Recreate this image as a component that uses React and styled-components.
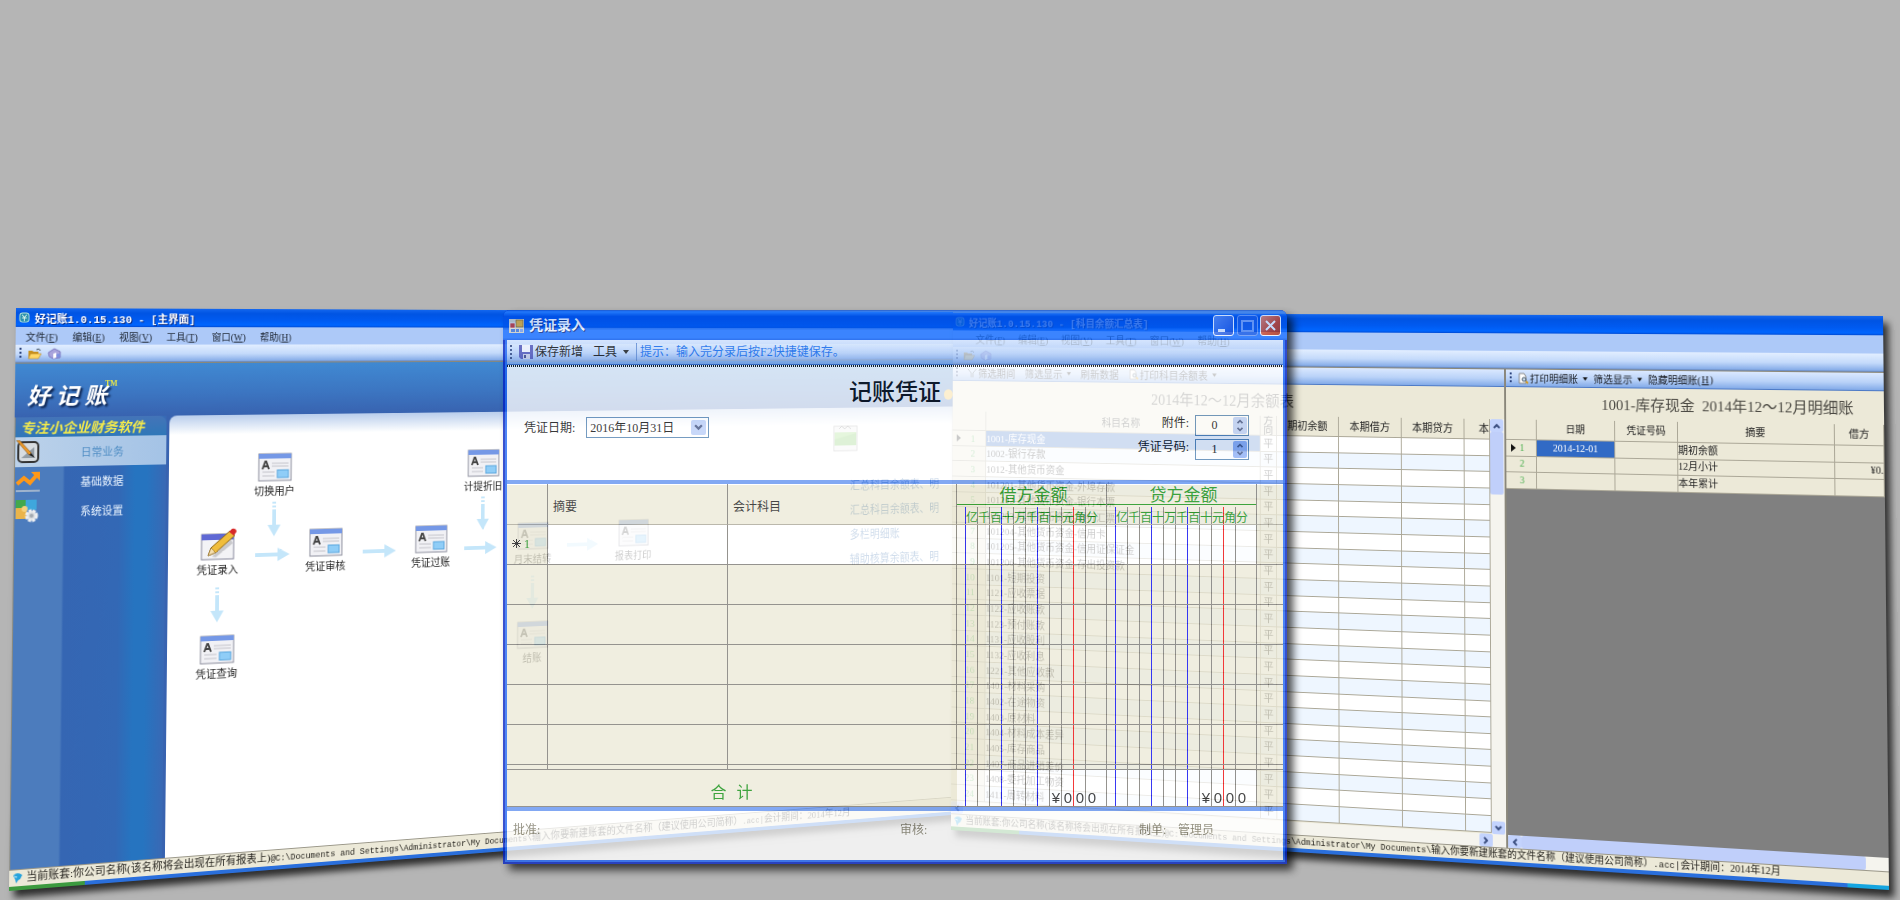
import React from 'react';
import styled, { createGlobalStyle, css } from 'styled-components';

const GlobalStyle = createGlobalStyle`
  * { box-sizing: border-box; }
  body { margin: 0; background: #b5b5b5; }
  button, input, select { font: inherit; color: inherit; margin: 0; }
  button { background: none; border: 0; padding: 0; cursor: pointer; white-space: nowrap; }
  table { border-collapse: separate; border-spacing: 0; table-layout: fixed; }
  td, th { padding: 0; font-weight: normal; }
`;

const cjk = '"Liberation Serif", "Noto Sans CJK SC", sans-serif';

/* Projects a flat width x height panel onto four desktop corners (TL, TR, BR, BL). */
function project(width, height, [[x0, y0], [x1, y1], [x2, y2], [x3, y3]]) {
  const dx1 = x1 - x2, dx2 = x3 - x2, sx = x0 - x1 + x2 - x3;
  const dy1 = y1 - y2, dy2 = y3 - y2, sy = y0 - y1 + y2 - y3;
  const den = dx1 * dy2 - dx2 * dy1;
  const g = (sx * dy2 - dx2 * sy) / den;
  const h = (dx1 * sy - sx * dy1) / den;
  const m = [
    (x1 - x0 + g * x1) / width, (y1 - y0 + g * y1) / width, 0, g / width,
    (x3 - x0 + h * x3) / height, (y3 - y0 + h * y3) / height, 0, h / height,
    0, 0, 1, 0,
    x0, y0, 0, 1,
  ];
  return `matrix3d(${m.join(',')})`;
}

const leftView = project(1084, 583, [[16, 308], [953, 312], [952, 815], [9, 891]]);
const rightView = project(1000, 560, [[953, 313], [1883, 316], [1889, 890], [951, 830]]);

const Desktop = styled.main`
  position: relative;
  width: 100%;
  min-height: 100vh;
  overflow: hidden;
  background: #b5b5b5;
  font-family: ${cjk};
  font-size: 12px;
`;

const TiltedWindow = styled.section`
  position: absolute;
  top: 0;
  left: calc(50% - 950px);
  width: ${p => p.$w}px;
  height: ${p => p.$h}px;
  display: flex;
  flex-direction: column;
  transform-origin: 0 0;
  transform: ${p => p.$view};
  box-shadow: 5px 7px 7px rgba(0, 0, 0, .75);
  background: #ece9d8;
  font-size: 11px;
`;

const AppTitle = styled.header`
  display: flex;
  align-items: center;
  gap: 5px;
  flex: none;
  height: 19px;
  padding: 0 3px;
  background: linear-gradient(#1467ee, #0054e3 25%, #005af0 60%, #0066ff 90%, #0048d0);
  color: #fff;
  font-weight: bold;
  text-shadow: 1px 1px #0a2a80;
  white-space: nowrap;
  svg { width: 11px; height: 11px; }
  small { font: bold 11px "Liberation Mono", monospace; }
`;

const MenuBar = styled.nav`
  display: flex;
  align-items: center;
  gap: 15px;
  flex: none;
  height: 18px;
  padding-left: ${p => p.$inset}px;
  background: #adc9f8;
  color: #1c2430;
  font-size: ${p => p.$size}px;
  u { font-size: 10px; }
`;

const IconBar = styled.div`
  display: flex;
  align-items: center;
  gap: 6px;
  flex: none;
  height: 18px;
  padding: 0 4px;
  background: linear-gradient(#e2eeff, #c4dafb 55%, #84abe8);
  border-bottom: 1px solid #6f8fc4;
  button { display: flex; }
  svg { width: 14px; height: 12px; }
`;

const Grip = styled.i`
  flex: none;
  width: 2px;
  height: ${p => p.$h || 11}px;
  background: repeating-linear-gradient(#29417c 0 2px, transparent 2px 4px);
`;

const StatusBar = styled.footer`
  display: flex;
  align-items: center;
  gap: 3px;
  flex: none;
  height: ${p => p.$h}px;
  padding: 0 3px;
  background: #ece9d8;
  border-top: 1px solid #9b988a;
  color: #26241f;
  font-size: ${p => p.$size}px;
  line-height: 1;
  white-space: nowrap;
  svg { width: 11px; height: 12px; flex: none; }
  code { font: 9px "Liberation Mono", monospace; }
`;

const TaskEdge = styled.div`
  flex: none;
  height: 4px;
  background: ${p => p.$end
    ? 'linear-gradient(90deg, #3c9a3f 0 8%, #2a6fdc 8% 96%, #14a5e0 96%)'
    : 'linear-gradient(90deg, #3c9a3f 0 7%, #2a6fdc 7%)'};
`;

/* ---- main screen ---- */
const Banner = styled.div`
  display: flex;
  justify-content: space-between;
  align-items: center;
  flex: none;
  height: 55px;
  padding: 0 0 0 12px;
  background: linear-gradient(#4089d2, #3c76c2 55%, #3863b0);
  border-top: 1px solid #8c8878;
`;

const Logo = styled.h1`
  display: flex;
  align-items: flex-start;
  gap: 6px;
  margin: 7px 0 0;
  color: #fff;
  font: italic bold 23px/28px "Noto Sans CJK SC", sans-serif;
  text-shadow: 2px 2px 2px #0d2450;
  sup { font: bold 8px/8px "Liberation Serif", serif; color: #e6e64a; margin-left: -8px; text-shadow: none; }
`;

const BannerDot = styled.i`
  width: 12px;
  height: 12px;
  margin-top: 26px;
  border-radius: 50%;
  background: #f5b82e;
`;

const MainBody = styled.div`
  display: flex;
  flex: 1;
  min-height: 0;
  background: #3863b0;
`;

const SideNav = styled.nav`
  flex: none;
  width: 155px;
  background: linear-gradient(90deg, #4c7cbd 0 48px, #3566b3 50px, #3368b5 105px, #2674c0 122px, #2674c0 134px, #3a68b4 155px);
  border-left: 1px solid #8a8a80;
`;

const Slogan = styled.p`
  margin: 0;
  height: 20px;
  padding-left: 5px;
  border-radius: 0 8px 0 0;
  background: linear-gradient(#4474b8, #2f77b8);
  color: #f3ea4c;
  font: italic bold 14px/20px "Noto Sans CJK SC", sans-serif;
  white-space: nowrap;
`;

const NavButton = styled.button`
  display: grid;
  grid-template-columns: 48px 1fr;
  align-items: center;
  width: 100%;
  height: 30px;
  padding-left: 1px;
  text-align: left;
  font-size: 11px;
  color: ${p => p.$active ? '#4f8dc4' : '#eaf4ff'};
  background: ${p => p.$active ? 'linear-gradient(90deg, #bcd2ea, #a4c3e6)' : 'none'};
  span { padding-left: 17px; }
  svg { width: 24px; height: 24px; }
`;

const Flow = styled.div`
  position: relative;
  flex: 1;
  margin-left: 3px;
  border-radius: 8px 0 0 0;
  background: linear-gradient(#b9cdec, #fff 20px);
`;

const at = css`
  position: absolute;
  left: ${p => p.$x}px;
  top: ${p => p.$y}px;
`;

const FlowNode = styled.button`
  ${at}
  display: flex;
  flex-direction: column;
  align-items: center;
  gap: 3px;
  width: 60px;
  margin-left: -30px;
  font-size: 11px;
  line-height: 14px;
  color: #222;
  svg { width: 37px; height: 30px; }
`;

const FlowArrow = styled.svg`
  ${at}
  width: 38px;
  height: 16px;
  margin: -8px 0 0 -19px;
  transform: rotate(${p => p.$down ? 90 : 0}deg);
`;

const ReportLinks = styled.ul`
  ${at}
  margin: 0;
  padding: 0;
  list-style: none;
  white-space: nowrap;
  line-height: 28px;
  font-size: 13px;
  a { color: #2d66a8; text-decoration: none; }
`;

const ChartTile = styled.svg`
  ${at}
  width: 32px;
  height: 30px;
`;

/* ---- balance report ---- */
const Split = styled.div`
  display: grid;
  grid-template-columns: 617px 1fr;
  flex: 1;
  min-height: 0;
  border-top: 1px solid #8c8878;
`;

const Pane = styled.section`
  display: flex;
  flex-direction: column;
  min-width: 0;
  min-height: 0;
  overflow: hidden;
  background: ${p => p.$dark ? '#808080' : '#ece9d8'};
  border-left: ${p => p.$dark ? '2px solid #8a877b' : '0'};
`;

const PaneBar = styled.div`
  display: flex;
  align-items: center;
  gap: ${p => p.$gap}px;
  flex: none;
  height: 18px;
  padding: 0 4px;
  background: linear-gradient(#dbe9ff, #b9d2f8 55%, #82aae8);
  border-bottom: 1px solid #4d7ac6;
  font-size: ${p => p.$size}px;
  color: #16191f;
  button { display: flex; align-items: center; gap: 1px; }
  svg { width: 12px; height: 12px; }
  svg.caret { width: 5px; height: 4px; margin-left: 4px; }
`;

const PaneTitle = styled.h2`
  flex: none;
  margin: 0;
  height: 33px;
  padding-left: ${p => p.$inset}px;
  background: #ece9d8;
  color: #4a4842;
  font: normal ${p => p.$size}px/35px ${cjk};
  white-space: nowrap;
`;

const PaneGrid = styled.div`
  display: flex;
  flex: 1;
  min-height: 0;
  overflow: hidden;
`;

const Ledger = styled.table`
  flex: none;
  width: ${p => p.$w}px;
  height: ${p => p.$h}px;
  font-size: ${p => p.$size}px;
  line-height: 14px;
  background: #fff;
  white-space: nowrap;
  color: #222;
  td, th { border-right: 1px solid #aba797; border-bottom: 1px solid #aba797; overflow: hidden; }
  thead th { background: #ece9d8; height: 21px; line-height: 10px; }
  tbody th { background: #ece9d8; color: #4bb04f; padding-right: 12px; text-align: right; }
`;

const LedgerRow = styled.tr`
  td { background: ${p => p.$plain ? '#ece9d8' : p.$alt ? '#eef6ff' : '#fff'}; }
  td:nth-child(2) { ${p => p.$picked && 'background: #316ac5; color: #fff;'} }
`;

const ClippedHead = styled.th`
  text-align: right;
`;

const Center = styled.td`
  text-align: center;
`;

const Right = styled.td`
  text-align: right;
`;

const Marker = styled.svg`
  float: left;
  width: 5px;
  height: 8px;
  margin: 3px 0 0 5px;
`;

const ScrollTrack = styled.div`
  display: flex;
  flex-direction: ${p => p.$vertical ? 'column' : 'row'};
  justify-content: space-between;
  flex: ${p => p.$vertical ? '1' : 'none'};
  height: ${p => p.$vertical ? 'auto' : '13px'};
  padding-right: ${p => p.$corner ? 14 : 0}px;
  background: #f5f4ee;
`;

const ScrollArrow = styled.button`
  display: grid;
  place-items: center;
  flex: none;
  width: 14px;
  height: 13px;
  border-radius: 2px;
  background: #c3d3fd;
  svg { width: 8px; height: 8px; transform: rotate(${p => p.$turn}deg); }
`;

const Thumb = styled.i`
  flex: ${p => p.$vertical ? '0 0 64px' : '0 1 345px'};
  margin-right: auto;
  width: ${p => p.$vertical ? '14px' : 'auto'};
  margin-bottom: ${p => p.$vertical ? 'auto' : '0'};
  border-radius: 2px;
  background: #c0cffa;
`;

/* ---- voucher window ---- */
const Voucher = styled.section`
  position: absolute;
  top: 310px;
  left: calc(50% - 447px);
  width: 784px;
  display: flex;
  flex-direction: column;
  padding: 0 2px 2px;
  border: 2px solid #0020c0;
  border-top: 0;
  border-radius: 7px 7px 0 0;
  box-shadow: 6px 6px 8px rgba(0, 0, 0, .9);
  background: #1c62f2;
  opacity: .78;
`;

const VoucherTitle = styled.header`
  display: flex;
  align-items: center;
  gap: 5px;
  height: 30px;
  margin: 0 -4px;
  padding: 1px 6px 0;
  border-radius: 7px 7px 0 0;
  background: linear-gradient(#0045d0, #2a80ff 6%, #0050e6 22%, #0054e8 58%, #1a70ff 68%, #1a70ff 92%, #0a58e8);
  color: #fff;
  h2 { flex: 1; margin: 0; font: bold 14px/20px ${cjk}; text-shadow: 1px 1px #0a2a80; }
  > svg { width: 15px; height: 14px; }
`;

const CaptionButton = styled.button`
  display: grid;
  place-items: center;
  width: 21px;
  height: 21px;
  margin-left: ${p => p.$close ? '-3px' : '-2px'};
  border: 1px solid ${p => p.$dim ? '#6f9cf5' : '#fff'};
  border-radius: 3px;
  background: ${p => p.$close
    ? 'linear-gradient(135deg, #e8866a, #d0401c 60%, #b53010)'
    : p.$dim ? '#1659e4' : 'linear-gradient(135deg, #5a8df5, #1c50d8)'};
  svg { width: 15px; height: 15px; }
`;

const VoucherBar = styled.div`
  display: flex;
  align-items: center;
  height: 25px;
  padding-left: 3px;
  background: linear-gradient(#e0edff, #b8d1f8 55%, #7fa6e6);
  border-bottom: 1px solid #2f5fb8;
  line-height: 18px;
  color: #000;
  button { display: flex; align-items: center; }
`;

const SaveButton = styled.button`
  gap: 2px;
  margin: 0 10px 0 7px;
  svg { width: 14px; height: 14px; }
`;

const ToolsButton = styled.button`
  gap: 6px;
  svg { width: 6px; height: 4px; }
`;

const Hint = styled.span`
  margin-left: 7px;
  padding-left: 3px;
  border-left: 1px solid #5b86cf;
  color: #005fe8;
`;

const Dots = styled.i`
  height: 2px;
  background: repeating-linear-gradient(90deg, #000 0 1px, #fff 1px 2px);
`;

const VoucherForm = styled.form`
  display: grid;
  grid-template-columns: 1fr auto 1fr;
  height: 113px;
  background: #fff;
  h3 { margin: 0; padding-top: 11px; font: 500 23px/30px ${cjk}; color: #000; }
`;

const DateField = styled.div`
  display: flex;
  align-items: center;
  align-self: start;
  gap: 11px;
  padding: 50px 0 0 17px;
  line-height: 20px;
`;

const DateBox = styled.span`
  display: flex;
  align-items: center;
  width: 123px;
  height: 21px;
  padding: 0 2px;
  border: 1px solid #4f80b0;
  background: #fff;
  input { width: 100%; min-width: 0; border: 0; padding: 0 1px; outline: 0; background: none; }
`;

const DropButton = styled.button`
  display: grid;
  place-items: center;
  flex: none;
  width: 15px;
  height: 15px;
  border-radius: 2px;
  background: #b9cdf8;
  svg { width: 9px; height: 9px; }
`;

const NumberFields = styled.div`
  display: flex;
  flex-direction: column;
  align-items: flex-end;
  gap: 3px;
  padding: 48px 34px 0 0;
`;

const NumberField = styled.label`
  display: flex;
  gap: 6px;
  height: 21px;
  line-height: 16px;
`;

const SpinBox = styled.span`
  display: flex;
  align-items: center;
  width: 54px;
  height: 21px;
  padding-right: 1px;
  border: 1px solid #4f80b0;
  input { width: 100%; min-width: 0; padding: 0 0 2px; border: 0; outline: 0; background: none; text-align: center; }
`;

const Spinner = styled.span`
  display: grid;
  flex: none;
  width: 14px;
  height: 17px;
  border-radius: 2px;
  background: ${p => p.$strong ? '#8fb0f5' : '#b9cdf8'};
  button { display: grid; place-items: center; }
  svg { width: 8px; height: 5px; }
`;

const Rule = styled.i`
  flex: none;
  height: 4px;
  background: #5f90f0;
`;

const EntryTable = styled.table`
  width: 100%;
  color: #111;
  td, th { border-right: 1px solid #77756f; border-bottom: 1px solid #77756f; background-color: #ece9d8; text-align: left; }
  thead th { border-bottom-color: #a8a495; box-shadow: inset 0 1px #fff; }
  tr > :last-child { border-right: 0; }
`;

const EntryRow = styled.tr`
  height: ${p => p.$h}px;
  td:not(:last-child) { background-color: ${p => p.$active ? '#fff' : '#ece9d8'}; }
`;

const HeadCell = styled.th`
  padding: 3px 0 0 5px !important;
`;

const rulings = css`
  background-image:
    linear-gradient(#0000f0, #0000f0), linear-gradient(#0000f0, #0000f0), linear-gradient(#0000f0, #0000f0),
    linear-gradient(#f00000, #f00000),
    repeating-linear-gradient(90deg, #77756f 0 1px, transparent 1px 12px);
  background-repeat: no-repeat;
  background-size: 1px 100%, 1px 100%, 1px 100%, 1px 100%, 121px 100%;
  background-position: 8px 0, 44px 0, 80px 0, 116px 0, 8px 0;
`;

const Ruled = styled.td`
  ${rulings}
`;

const AmountHead = styled.th`
  color: #078a07;
  vertical-align: top;
  strong { display: block; height: 21px; padding-left: 4px; border-bottom: 1px solid #078a07; text-align: center; font: normal 17px/23px ${cjk}; }
`;

const Digits = styled.span`
  display: grid;
  grid-template-columns: repeat(11, 12px);
  height: 17px;
  margin-top: 2px;
  padding-left: 9px;
  line-height: 23px;
  ${rulings}
`;

const TotalLabel = styled.td`
  border-right-color: #ece9d8 !important;
`;

const TotalText = styled.span`
  display: flex;
  justify-content: center;
  gap: 10px;
  padding-top: 10px;
  color: #078a07;
  font-size: 16px;
  line-height: 20px;
`;

const TotalAmount = styled.td`
  ${rulings}
  background-color: #fff !important;
  vertical-align: bottom;
`;

const TotalDigits = styled.span`
  display: grid;
  grid-template-columns: repeat(4, 12px);
  padding-left: 93px;
  font: 15px/16px "Liberation Sans", sans-serif;
  text-align: center;
`;

const NewMark = styled.svg`
  width: 9px;
  height: 9px;
  margin: 0 3px 0 5px;
`;

const RowNo = styled.span`
  color: #078a07;
`;

const Signatures = styled.footer`
  display: grid;
  grid-template-columns: 387px 239px 39px 1fr;
  height: 49px;
  padding: 9px 0 0 6px;
  background: #fff;
  color: #7d7a68;
  line-height: 20px;
`;

/* ---- drawings ---- */
const Seal = () => (
  <svg viewBox="0 0 12 12" aria-hidden="true">
    <rect x="1" y="1" width="10" height="10" rx="3" fill="#2a8fae" stroke="#b7e6d8" />
    <path d="M3.5 3l2.5 3 2.500-3M3.500 6.500h5M6 6v4" stroke="#dff7ea" fill="none" />
  </svg>
);
const Folder = () => (
  <svg viewBox="0 0 14 12" aria-hidden="true">
    <path d="M1 3h4l1 1h5v7H1z" fill="#c8901c" />
    <path d="M3 6h11l-3 5H1z" fill="#ffd766" stroke="#a8761a" strokeWidth=".5" />
    <path d="M9 2q3-2 4 1" stroke="#345" fill="none" />
  </svg>
);
const Home = () => (
  <svg viewBox="0 0 14 12" aria-hidden="true">
    <path d="M1 5l6-4 6 3v6l-7 1-4-2z" fill="#a9a4dc" stroke="#7c78c0" />
    <path d="M6 6l3-1v5l-3 1z" fill="#fff" /><circle cx="11" cy="8" r="2" fill="#7b8fe0" />
  </svg>
);
const Bird = () => (
  <svg viewBox="0 0 11 12" aria-hidden="true">
    <path d="M1 3q4-4 9 0l-2 4-2 1-2 3-1-4z" fill="#27a3dc" /><path d="M2 4l3 1" stroke="#c7efff" />
  </svg>
);
const FormCard = () => (
  <svg viewBox="0 0 37 30" aria-hidden="true">
    <rect x="1" y="1" width="35" height="28" fill="#f1f1f5" stroke="#8b8d9c" />
    <rect x="1" y="1" width="35" height="5" fill="#7598e6" />
    <path d="M5 17l3-8h1l3 8M6 14h5" stroke="#444" strokeWidth="2" fill="none" />
    <path d="M15 11h18M15 14h18M5 20h13M5 24h13" stroke="#c3c3ca" />
    <rect x="21" y="18" width="12" height="8" fill="#8fcdf7" stroke="#58a5dd" />
  </svg>
);
const EditCard = () => (
  <svg viewBox="0 0 37 30" aria-hidden="true" overflow="visible">
    <rect x="1" y="3" width="34" height="26" fill="#f3f3f6" stroke="#85869a" />
    <rect x="1" y="3" width="34" height="6" fill="#5f68d4" />
    <path d="M12 26l20-17 2 4-18 14z" fill="#c9c9cc" />
    <path d="M8 25l3-8L31 0l5 5-20 17z" fill="#f0bd3b" stroke="#8b6416" />
    <path d="M8 25l3-8 5 5z" fill="#f5dfb0" stroke="#8b6416" strokeWidth=".6" />
    <path d="M30 1l3-3q4-1 5 3l-3 4z" fill="#d72929" />
  </svg>
);
const Pencil = () => (
  <svg viewBox="0 0 24 24" aria-hidden="true">
    <rect x="2" y="2" width="20" height="20" rx="4" fill="#d7dce0" stroke="#333" strokeWidth="2" />
    <path d="M5 18h13V7z" fill="#939da5" />
    <path d="M0 0l3 0 12 13-2 2z" fill="#f09a25" stroke="#7b4b16" strokeWidth=".6" /><path d="M13 15l2-2 4 5z" fill="#222" />
  </svg>
);
const Trend = () => (
  <svg viewBox="0 0 24 24" aria-hidden="true">
    <path d="M1 14l7-6 6 5 7-8" stroke="#ff9818" strokeWidth="4" fill="none" />
    <path d="M15 2h9v9z" fill="#ff9818" /><path d="M0 21h24" stroke="#9fb3cd" strokeWidth="2" />
  </svg>
);
const Puzzle = () => (
  <svg viewBox="0 0 24 24" aria-hidden="true">
    <rect width="10" height="9" fill="#42a84c" /><rect x="10" width="11" height="10" fill="#3fa7dc" />
    <rect y="8" width="11" height="11" fill="#eab44a" /><circle cx="9" cy="9" r="3" fill="#f6d27c" />
    <circle cx="16" cy="16" r="5" fill="#d9dde0" stroke="#eef0f2" strokeWidth="3" strokeDasharray="3 1" />
    <circle cx="16" cy="16" r="2" fill="#a2a9b0" />
  </svg>
);
const Preview = () => (
  <svg viewBox="0 0 12 12" aria-hidden="true">
    <path d="M2 1h5l2 3v7H2z" fill="#fff" stroke="#888" /><circle cx="7" cy="7" r="2" fill="#cde" stroke="#456" />
    <path d="M9 9l2 2" stroke="#d49a20" strokeWidth="2" />
  </svg>
);
const Funnel = () => (
  <svg viewBox="0 0 12 12" aria-hidden="true"><path d="M1 2l4 4v5M11 2L7 6v5" stroke="#456" fill="none" /></svg>
);
const Chevron = ({ up }) => (
  <svg viewBox="0 0 8 6" aria-hidden="true">
    <path d={up ? 'M1 5l3-3 3 3' : 'M1 1l3 3 3-3'} stroke="#3c4f80" strokeWidth="2" fill="none" />
  </svg>
);
const Caret = () => <svg className="caret" viewBox="0 0 6 4" aria-hidden="true"><path d="M0 0h6L3 4z" fill="#111" /></svg>;
const Pointer = () => <Marker viewBox="0 0 5 8" aria-hidden="true"><path d="M0 0l5 4-5 4z" fill="#111" /></Marker>;
const Disk = () => (
  <svg viewBox="0 0 14 14" aria-hidden="true">
    <path d="M0 0h14v14H2L0 12z" fill="#4a4fb4" /><rect x="3" y="0" width="8" height="7" fill="#f0f3fb" />
    <rect x="4" y="9" width="7" height="5" fill="#c7cbe2" /><rect x="5" y="10" width="2" height="3" fill="#333a80" />
  </svg>
);
const FormIcon = () => (
  <svg viewBox="0 0 15 14" aria-hidden="true">
    <rect width="15" height="14" fill="#d9d5c0" /><rect x="7" y="1" width="7" height="7" fill="#f0b429" stroke="#7d5c10" strokeWidth=".6" />
    <rect x="1" y="4" width="5" height="5" fill="#d33a28" stroke="#fff" strokeWidth=".6" />
    <rect x="2" y="10" width="4" height="3" fill="#3f74d8" /><rect x="7" y="10" width="3" height="3" fill="#3f74d8" /><rect x="11" y="10" width="3" height="3" fill="#78a0ea" />
  </svg>
);

const menuItems = [['文件', 'F'], ['编辑', 'E'], ['视图', 'V'], ['工具', 'T'], ['窗口', 'W'], ['帮助', 'H']];
const Menus = ({ inset, size }) => (
  <MenuBar $inset={inset} $size={size}>
    {menuItems.map(([name, key]) => <button key={key}>{name}(<u>{key}</u>)</button>)}
  </MenuBar>
);

const Status = ({ h, size }) => (
  <StatusBar $h={h} $size={size}>
    <Bird />
    <span>
      当前账套:你公司名称(该名称将会出现在所有报表上)<code>@C:\Documents and Settings\Administrator\My Documents\</code>输入你要新建账套的文件名称（建议使用公司简称）<code>.acc|</code>会计期间：2014年12月
    </span>
  </StatusBar>
);

const nodes = [
  [112, 40, '切换用户'], [344, 40, '计提折旧'],
  [52, 120, '凭证录入', true], [168, 120, '凭证审核'], [285, 120, '凭证过账'], [402, 120, '月末结转'], [521, 120, '报表打印'],
  [52, 227, '凭证查询'], [402, 227, '结账'],
];
const arrows = [
  [112, 110, true], [344, 110, true], [52, 197, true], [402, 197, true],
  [111, 146], [228, 146], [342, 146], [461, 146],
];

const MainScreen = () => (
  <TiltedWindow $w={1084} $h={583} $view={leftView}>
    <AppTitle><Seal /><span>好记账<small>1.0.15.130 - [</small>主界面<small>]</small></span></AppTitle>
    <Menus inset={10} size={10} />
    <IconBar><Grip /><button aria-label="打开"><Folder /></button><button aria-label="主页"><Home /></button></IconBar>
    <Banner>
      <Logo><span>好</span><span>记</span><span>账</span><sup>TM</sup></Logo>
      <BannerDot />
    </Banner>
    <MainBody>
      <SideNav>
        <Slogan>专注小企业财务软件</Slogan>
        <NavButton $active><Pencil /><span>日常业务</span></NavButton>
        <NavButton><Trend /><span>基础数据</span></NavButton>
        <NavButton><Puzzle /><span>系统设置</span></NavButton>
      </SideNav>
      <Flow>
        {nodes.map(([x, y, label, edit]) => (
          <FlowNode key={label} $x={x} $y={y}>{edit ? <EditCard /> : <FormCard />}{label}</FlowNode>
        ))}
        {arrows.map(([x, y, down]) => (
          <FlowArrow key={`${x}-${y}`} $x={x} $y={y} $down={down} viewBox="0 0 38 16" aria-hidden="true">
            <path d={down ? 'M0 6h2v4H0zM4 6h2v4H4zM8 6h16V1l12 7-12 7v-5H8z' : 'M0 6h24V1l13 7-13 7v-5H0z'} fill="#c4e6fa" />
          </FlowArrow>
        ))}
        <ChartTile $x={769} $y={20} viewBox="0 0 32 30" aria-hidden="true">
          <rect x="1" y="1" width="30" height="28" fill="#eee" stroke="#999" />
          <path d="M2 8h28v15H2z" fill="#8bd468" /><path d="M2 16L30 9v14H2z" fill="#6cc24c" /><path d="M8 4l3-3 4 3 4-3 4 3" stroke="#666" fill="none" />
        </ChartTile>
        <ReportLinks $x={791} $y={75}>
          {['汇总科目余额表、明', '汇总科目余额表、明', '多栏明细账', '辅助核算余额表、明'].map((t, i) => (
            <li key={i}><a href="#report">{t}</a></li>
          ))}
        </ReportLinks>
      </Flow>
    </MainBody>
    <Status h={17} size={11} />
    <TaskEdge />
  </TiltedWindow>
);

const accounts = [
  '1001-库存现金', '1002-银行存款', '1012-其他货币资金', '101201-其他货币资金-外埠存款', '101202-其他货币资金-银行本票',
  '101203-其他货币资金-银行汇票', '101204-其他货币资金-信用卡', '101205-其他货币资金-信用证保证金', '101206-其他货币资金-存出投资款',
  '1101-短期投资', '1121-应收票据', '1122-应收账款', '1123-预付账款', '1131-应收股利', '1132-应收利息', '1221-其他应收款',
  '1401-材料采购', '1402-在途物资', '1403-原材料', '1404-材料成本差异', '1405-库存商品', '1407-商品进销差价', '1408-委托加工物资', '1411-周转材料',
];

const BalanceReport = () => (
  <TiltedWindow $w={1000} $h={560} $view={rightView}>
    <AppTitle><Seal /><span>好记账<small>1.0.15.130 - [</small>科目余额汇总表<small>]</small></span></AppTitle>
    <Menus inset={27} size={11} />
    <IconBar><Grip /><button aria-label="打开"><Folder /></button><button aria-label="主页"><Home /></button></IconBar>
    <Split>
      <Pane>
        <PaneBar $size={11} $gap={11}>
          <Grip /><button><Funnel />筛选期间</button><button>筛选显示 <Caret /></button><button>刷新数据</button>
          <button><Preview />打印科目余额表 <Caret /></button>
        </PaneBar>
        <PaneTitle $inset={231} $size={16}>2014年12～12月余额表</PaneTitle>
        <PaneGrid>
          <Ledger $w={602} $h={421} $size={11}>
            <colgroup>{[40, 314, 18, 68, 68, 67, 27].map((w, i) => <col key={i} width={w} />)}</colgroup>
            <thead>
              <tr><th /><th>科目名称</th><th>方<br />向</th><th>期初余额</th><th>本期借方</th><th>本期贷方</th><ClippedHead>本</ClippedHead></tr>
            </thead>
            <tbody>
              {accounts.map((name, i) => (
                <LedgerRow key={name} $alt={i % 2 === 1} $picked={i === 0}>
                  <th>{i === 0 && <Pointer />}{i + 1}</th>
                  <td>{name}</td><Center>平</Center><td /><td /><td /><td />
                </LedgerRow>
              ))}
            </tbody>
          </Ledger>
          <ScrollTrack $vertical>
            <ScrollArrow $turn={180} aria-label="向上"><Chevron /></ScrollArrow>
            <Thumb $vertical />
            <ScrollArrow $turn={0} aria-label="向下"><Chevron /></ScrollArrow>
          </ScrollTrack>
        </PaneGrid>
        <ScrollTrack $corner>
          <ScrollArrow $turn={90} aria-label="向左"><Chevron /></ScrollArrow>
          <ScrollArrow $turn={-90} aria-label="向右"><Chevron /></ScrollArrow>
        </ScrollTrack>
      </Pane>
      <Pane $dark>
        <PaneBar $size={10} $gap={6}>
          <Grip /><button><Preview />打印明细账 <Caret /></button><button>筛选显示 <Caret /></button><button>隐藏明细账(<u>H</u>)</button>
        </PaneBar>
        <PaneTitle $inset={99} $size={15}>1001-库存现金&nbsp; 2014年12～12月明细账</PaneTitle>
        <PaneGrid>
          <Ledger $w={381} $h={71} $size={10}>
            <colgroup>{[32, 81, 64, 156, 48].map((w, i) => <col key={i} width={w} />)}</colgroup>
            <thead><tr><th /><th>日期</th><th>凭证号码</th><th>摘要</th><th>借方</th></tr></thead>
            <tbody>
              <LedgerRow $plain $picked><th><Pointer />1</th><Center>2014-12-01</Center><td /><td>期初余额</td><td /></LedgerRow>
              <LedgerRow $plain><th>2</th><td /><td /><td>12月小计</td><Right>¥0.</Right></LedgerRow>
              <LedgerRow $plain><th>3</th><td /><td /><td>本年累计</td><td /></LedgerRow>
            </tbody>
          </Ledger>
        </PaneGrid>
        <ScrollTrack>
          <ScrollArrow $turn={90} aria-label="向左"><Chevron /></ScrollArrow>
          <Thumb />
        </ScrollTrack>
      </Pane>
    </Split>
    <Status h={14} size={10} />
    <TaskEdge $end />
  </TiltedWindow>
);

const Spin = ({ label, value, strong }) => (
  <NumberField>
    {label}
    <SpinBox>
      <input defaultValue={value} />
      <Spinner $strong={strong}>
        <button type="button" aria-label="增加"><Chevron up /></button>
        <button type="button" aria-label="减少"><Chevron /></button>
      </Spinner>
    </SpinBox>
  </NumberField>
);

const places = [...'亿千百十万千百十元角分'];

const VoucherEntry = () => (
  <Voucher>
    <VoucherTitle>
      <FormIcon /><h2>凭证录入</h2>
      <CaptionButton aria-label="最小化"><svg viewBox="0 0 15 15"><path d="M2 11h7v3H2z" fill="#fff" /></svg></CaptionButton>
      <CaptionButton $dim aria-label="最大化"><svg viewBox="0 0 15 15"><path d="M2 3h11v10H2z" stroke="#7ea4f5" strokeWidth="2" fill="none" /></svg></CaptionButton>
      <CaptionButton $close aria-label="关闭"><svg viewBox="0 0 15 15"><path d="M3 3l9 9M12 3l-9 9" stroke="#fff" strokeWidth="2" /></svg></CaptionButton>
    </VoucherTitle>
    <VoucherBar>
      <Grip $h={14} />
      <SaveButton><Disk />保存新增</SaveButton>
      <ToolsButton>工具<Caret /></ToolsButton>
      <Hint>提示：输入完分录后按F2快捷键保存。</Hint>
    </VoucherBar>
    <Dots />
    <VoucherForm onSubmit={e => e.preventDefault()}>
      <DateField>
        <label htmlFor="voucher-date">凭证日期:</label>
        <DateBox>
          <input id="voucher-date" defaultValue="2016年10月31日" />
          <DropButton type="button" aria-label="选择日期"><Chevron /></DropButton>
        </DateBox>
      </DateField>
      <h3>记账凭证</h3>
      <NumberFields>
        <Spin label="附件:" value="0" />
        <Spin label="凭证号码:" value="1" strong />
      </NumberFields>
    </VoucherForm>
    <Rule />
    <EntryTable>
      <colgroup><col width="41" /><col width="180" /><col /><col width="150" /><col width="150" /><col width="26" /></colgroup>
      <thead>
        <EntryRow $h={41}>
          <th /><HeadCell>摘要</HeadCell><HeadCell>会计科目</HeadCell>
          {['借方金额', '贷方金额'].map(t => (
            <AmountHead key={t}><strong>{t}</strong><Digits>{places.map((p, i) => <span key={i}>{p}</span>)}</Digits></AmountHead>
          ))}
          <th />
        </EntryRow>
      </thead>
      <tbody>
        {[40, 40, 40, 40, 40, 40, 5].map((h, i) => (
          <EntryRow key={i} $h={h} $active={i === 0}>
            <th>
              {i === 0 && (
                <>
                  <NewMark viewBox="0 0 9 9" aria-hidden="true"><path d="M4.500 0v9M0 4.500h9M1 1l7 7M8 1l-7 7" stroke="#111" /></NewMark>
                  <RowNo>1</RowNo>
                </>
              )}
            </th>
            <td /><td /><Ruled /><Ruled /><td />
          </EntryRow>
        ))}
      </tbody>
      <tfoot>
        <EntryRow $h={37}>
          <TotalLabel colSpan={3}><TotalText><span>合</span><span>计</span></TotalText></TotalLabel>
          {[0, 1].map(i => (
            <TotalAmount key={i}><TotalDigits>{[...'¥000'].map((d, k) => <span key={k}>{d}</span>)}</TotalDigits></TotalAmount>
          ))}
          <td />
        </EntryRow>
      </tfoot>
    </EntryTable>
    <Rule />
    <Signatures><span>批准:</span><span>审核:</span><span>制单:</span><span>管理员</span></Signatures>
  </Voucher>
);

export default function App() {
  return (
    <>
      <GlobalStyle />
      <Desktop>
        <MainScreen />
        <BalanceReport />
        <VoucherEntry />
      </Desktop>
    </>
  );
}
